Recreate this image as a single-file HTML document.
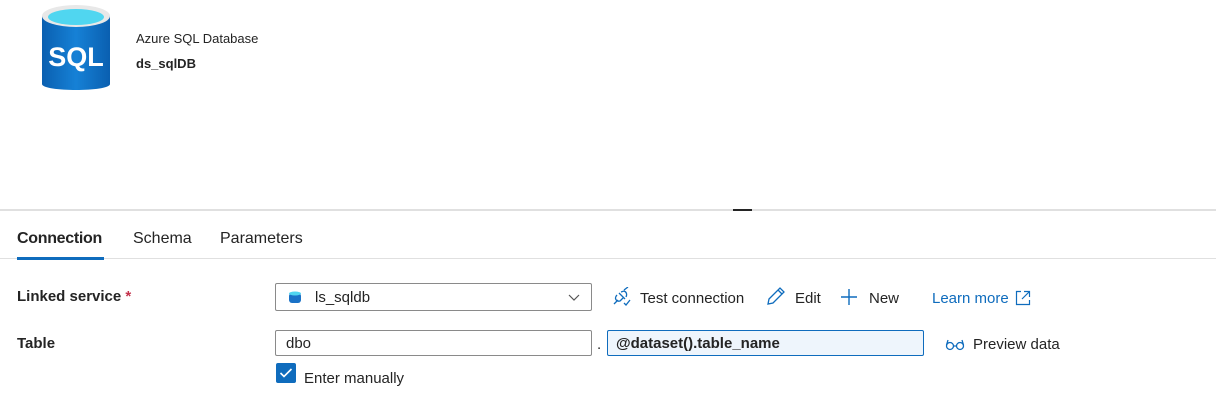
<!DOCTYPE html>
<html><head><style>
*{margin:0;padding:0;box-sizing:border-box}
body{width:1216px;height:420px;background:#fff;font-family:"Segoe UI","Liberation Sans",sans-serif;color:#242424;position:relative;overflow:hidden}
.a{position:absolute;white-space:nowrap}
.box{position:absolute;border:1px solid #8a8a8a;border-radius:2px;background:#fff;font-size:15px}
</style></head><body>
<svg class="a" style="left:40px;top:4px" width="72" height="92" viewBox="0 0 72 92">
<defs><linearGradient id="g" x1="0" x2="1"><stop offset="0" stop-color="#0a5fb0"/><stop offset=".5" stop-color="#1681d6"/><stop offset="1" stop-color="#0a5fb0"/></linearGradient></defs>
<path d="M2 12 V80 C2 88 70 88 70 80 V12 Z" fill="url(#g)"/>
<ellipse cx="36" cy="12" rx="34" ry="11" fill="#e8e8e8"/>
<ellipse cx="36" cy="13" rx="28" ry="8" fill="#50d6f0"/>
<text x="36" y="62" text-anchor="middle" font-family="Liberation Sans" font-weight="bold" font-size="27" fill="#fff">SQL</text>
</svg>
<div class="a" style="left:136px;top:31px;font-size:13px">Azure SQL Database</div>
<div class="a" style="left:136px;top:56px;font-size:13px;font-weight:bold">ds_sqlDB</div>
<div class="a" style="left:0;top:209px;width:1216px;height:2px;background:#e0e0e0"></div>
<div class="a" style="left:733px;top:209px;width:19px;height:2px;background:#242424"></div>
<div class="a" style="left:17px;top:230px;font-size:16px;font-weight:600;letter-spacing:-0.3px">Connection</div>
<div class="a" style="left:133px;top:230px;font-size:16px">Schema</div>
<div class="a" style="left:220px;top:230px;font-size:16px">Parameters</div>
<div class="a" style="left:0;top:258px;width:1216px;height:1px;background:#e0e0e0"></div>
<div class="a" style="left:17px;top:257px;width:87px;height:3px;background:#0f6cbd"></div>
<div class="a" style="left:17px;top:288px;font-size:15px;font-weight:600">Linked service <span style="color:#c4314b">*</span></div>
<div class="a" style="left:17px;top:335px;font-size:15px;font-weight:600">Table</div>
<div class="box" style="left:275px;top:283px;width:317px;height:28px">
<svg class="a" style="left:13px;top:7px" width="12" height="13" viewBox="0 0 12 13"><rect x="0" y="2" width="12" height="10" rx="3" fill="#1a72c7"/><ellipse cx="6" cy="2.5" rx="6" ry="2" fill="#50d6f0"/></svg>
<span class="a" style="left:39px;top:5px">ls_sqldb</span>
<svg class="a" style="left:292px;top:10px" width="12" height="8"><path d="M1 1 L6 6 L11 1" stroke="#555" fill="none" stroke-width="1.2"/></svg>
</div>
<svg class="a" style="left:611px;top:287px" width="22" height="20" viewBox="0 0 22 20" fill="none" stroke="#0f6cbd" stroke-width="1.3"><path d="M3 17 L7 13 M13 3 L17 0 M8 6 L14 12 M6 8 C3 11 5 15 9 14 L12 11 M10 5 L13 4 C16 5 16 8 15 10"/><path d="M13 16 L15 18 L19 13"/></svg>
<div class="a" style="left:640px;top:290px;font-size:15px">Test connection</div>
<svg class="a" style="left:766px;top:286px" width="20" height="20" viewBox="0 0 20 20" fill="none" stroke="#0f6cbd" stroke-width="1.3"><path d="M2 18 L3 13 L14 2 L18 6 L7 17 Z M12 4 L16 8"/></svg>
<div class="a" style="left:795px;top:290px;font-size:15px">Edit</div>
<svg class="a" style="left:840px;top:288px" width="18" height="18" fill="none" stroke="#0f6cbd" stroke-width="1.4"><path d="M9 1 V17 M1 9 H17"/></svg>
<div class="a" style="left:869px;top:290px;font-size:15px">New</div>
<div class="a" style="left:932px;top:290px;font-size:15px;color:#0f6cbd">Learn more</div>
<svg class="a" style="left:1015px;top:290px" width="16" height="16" fill="none" stroke="#0f6cbd" stroke-width="1.2"><path d="M6 1.5 H1.5 V14.5 H14.5 V10 M9 1.5 H14.5 V7 M14.5 1.5 L7 9"/></svg>
<div class="box" style="left:275px;top:330px;width:317px;height:26px"><span class="a" style="left:10px;top:4px">dbo</span></div>
<div class="a" style="left:597px;top:336px;font-size:15px">.</div>
<div class="box" style="left:607px;top:330px;width:317px;height:26px;border-color:#0f6cbd;background:#eef5fc"><span class="a" style="left:8px;top:4px;font-weight:600">@dataset().table_name</span></div>
<svg class="a" style="left:945px;top:337px" width="20" height="14" fill="none" stroke="#0f6cbd" stroke-width="1.3"><circle cx="5" cy="9" r="3.5"/><circle cx="15" cy="9" r="3.5"/><path d="M8.5 9 H11.5 M1.5 8 L3 3 M18.5 8 L17 3"/></svg>
<div class="a" style="left:973px;top:336px;font-size:15px">Preview data</div>
<div class="a" style="left:276px;top:363px;width:20px;height:20px;background:#0f6cbd;border-radius:2px"></div>
<svg class="a" style="left:279px;top:367px" width="14" height="12" fill="none" stroke="#fff" stroke-width="1.6"><path d="M1.5 6 L5 9.5 L12.5 2"/></svg>
<div class="a" style="left:304px;top:370px;font-size:15px">Enter manually</div>
</body></html>
